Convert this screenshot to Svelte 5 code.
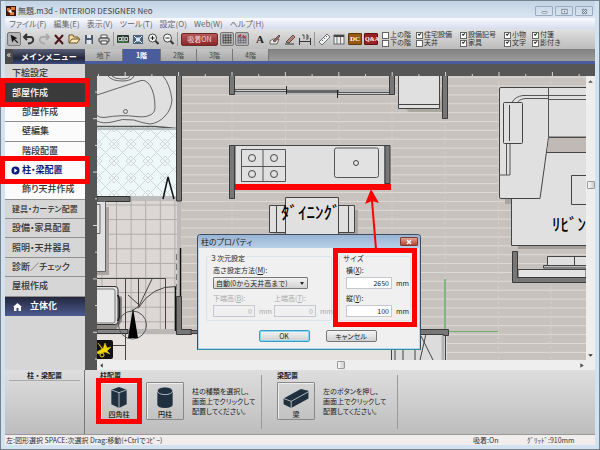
<script>
    const menus = ['ファイル(F)', '編集(E)', '表示(V)', 'ツール(T)', '設定(O)', 'Web(W)', 'ヘルプ(H)'];

    const layers = [
        { label: '上の階', on: false },
        { label: '住宅設備', on: true },
        { label: '設備記号', on: true },
        { label: '小物', on: true },
        { label: '付箋', on: true },
        { label: '下の階', on: false },
        { label: '天井', on: false },
        { label: '家具', on: true },
        { label: '文字', on: true },
        { label: '影付き', on: true }
    ];

    const sideItems = [
        { label: '下絵設定', kind: 'main' },
        { label: '部屋作成', kind: 'open', marked: true },
        { label: '部屋作成', kind: 'sub' },
        { label: '壁編集', kind: 'sub' },
        { label: '階段配置', kind: 'sub' },
        { label: '柱・梁配置', kind: 'sub current', marked: true },
        { label: '飾り天井作成', kind: 'sub' },
        { label: '建具・カーテン配置', kind: 'main long' },
        { label: '設備・家具配置', kind: 'main' },
        { label: '照明・天井器具', kind: 'main' },
        { label: '診断／チェック', kind: 'main' },
        { label: '屋根作成', kind: 'main' },
        { label: '立体化', kind: 'solid' }
    ];

    const floors = ['地下', '1階', '2階', '3階', '4階'];
    let floor = $state('1階');

    let width = $state('2650');
    let depth = $state('100');

    const ticks = Array.from({ length: 40 }, (_, i) => i);
    const burners = [[252, 158], [274, 158], [252, 174], [274, 174]];
</script>

<div class="window">
    <header class="titlebar">
        <svg class="app-icon" viewBox="0 0 10 10">
            <rect width="10" height="10" fill="#43190b" />
            <path d="M1 2h3v3H1zM5 1h4v3H5zM4 6h4v3H4z" fill="#e07a30" />
            <path d="M2 6l3-3 1 4z" fill="#fff" />
        </svg>
        <span class="title">無題.m3d - INTERIOR DESIGNER Neo</span>
        <div class="caption-buttons">
            <button aria-label="最小化"><svg viewBox="0 0 8 8"><rect x="1" y="4" width="6" height="2" rx="1" fill="#fff" stroke="#68788c" stroke-width=".8" /></svg></button>
            <button aria-label="最大化"><svg viewBox="0 0 8 8"><rect x="1" y="1.500" width="6" height="5" fill="#fff" stroke="#68788c" /><rect x="3" y="3" width="2" height="2" fill="#68788c" /></svg></button>
            <button aria-label="閉じる"><svg viewBox="0 0 8 8"><path d="M1.500 1.500l5 5M6.500 1.500l-5 5" stroke="#68788c" stroke-width="2.600" /><path d="M2 2l4 4M6 2l-4 4" stroke="#fff" /></svg></button>
        </div>
    </header>

    <nav class="menubar">
        {#each menus as m}
            <button>{m}</button>
        {/each}
    </nav>

    <div class="toolbar">
        <div class="tools">
            <button class="pressed" aria-label="選択"><svg viewBox="0 0 14 14"><path d="M3 2l8 4-3 1 4 4-1 1-4-4-2 3z" fill="#111" /></svg></button>
            <button aria-label="元に戻す"><svg viewBox="0 0 14 14"><path d="M5 2L2 5l3 3M2.500 5H8q4 0 3 4-1 2.500-5 2.500" fill="none" stroke="#333" stroke-width="2" /></svg></button>
            <button aria-label="やり直し"><svg viewBox="0 0 14 14"><path d="M9 2l3 3-3 3M11.500 5H6Q2 5 3 9q1 2.500 5 2.500" fill="none" stroke="#aaa" stroke-width="2" /></svg></button>
            <button aria-label="削除"><svg viewBox="0 0 14 14"><path d="M3 3l8 9M11 3l-8 9" stroke="#4c1717" stroke-width="2" /></svg></button>
            <button aria-label="開く"><svg viewBox="0 0 14 14"><path d="M2 11V3h4l1 2h4v2" fill="#f4dca5" stroke="#6b5323" /><path d="M2 11l3-4h8l-3 4z" fill="#ffeab8" stroke="#6b5323" /></svg></button>
            <button aria-label="保存"><svg viewBox="0 0 14 14"><path d="M3 3h8v9H3z" fill="#4b5b6c" /><path d="M5 3h4v3H5zM4.500 8h5v4h-5z" fill="#dfe5ea" /></svg></button>
            <button aria-label="印刷"><svg viewBox="0 0 14 14"><path d="M4 3h6v3H4z" fill="#fff" stroke="#555" /><rect x="2" y="6" width="10" height="4" rx="1" fill="#ccc" stroke="#333" /><path d="M4 9h6v3H4z" fill="#fff" stroke="#444" /></svg></button>
        </div>
        <i class="sep"></i>
        <div class="tools">
            <button aria-label="全体"><svg viewBox="0 0 14 14"><rect x="1" y="3" width="12" height="8" rx="1" fill="#2b3a30" /><path d="M2.500 5.500h3v3h-3zM6 5h2v4H6zM9 5.500h2.500v3H9z" fill="none" stroke="#e8efe8" stroke-width=".8" /><path d="M2 10h10" stroke="#4d9a55" /></svg></button>
            <button aria-label="画面に合わせる"><svg viewBox="0 0 14 14"><rect x="2" y="3" width="10" height="9" fill="#47617f" /><rect x="5" y="5.500" width="4" height="4" fill="#dbe7f2" /><path d="M3 4l2 2M11 4L9 6M3 11l2-2M11 11L9 9" stroke="#fff" /></svg></button>
            <button aria-label="拡大"><svg viewBox="0 0 14 14"><circle cx="6.500" cy="6" r="4" fill="#f4f8fb" stroke="#444" /><path d="M4.500 6h4M6.500 4v4" stroke="#222" /><path d="M9.500 9l3 3" stroke="#333" stroke-width="2" /></svg></button>
            <button aria-label="縮小"><svg viewBox="0 0 14 14"><circle cx="6.500" cy="6" r="4" fill="#f4f8fb" stroke="#444" /><path d="M4.500 6h4" stroke="#222" /><path d="M9.500 9l3 3" stroke="#333" stroke-width="2" /></svg></button>
        </div>
        <i class="sep"></i>
        <button class="snap">吸着ON</button>
        <div class="tools">
            <button class="pressed" aria-label="グリッド"><svg viewBox="0 0 14 14"><path d="M2 2.500h10M2 5.500h10M2 8.500h10M2 11.500h10M2.500 2v10M5.500 2v10M8.500 2v10M11.500 2v10" stroke="#444" /></svg></button>
            <button class="pressed" aria-label="グリッド吸着"><svg viewBox="0 0 14 14"><path d="M2 5.500h10M2 8.500h10M2 11.500h10M2.500 3v9M5.500 3v9M8.500 3v9M11.500 3v9" stroke="#667" /><path d="M3 4l3-2M8 3l3 3" stroke="#b33244" stroke-width="2" /></svg></button>
        </div>
        <i class="space"></i>
        <div class="tools">
            <button class="letter">A</button>
            <button aria-label="線"><svg viewBox="0 0 14 14"><path d="M2 9l3-2h6l-2 5H2z" fill="#eee" stroke="#665" /><path d="M5 9l6-6 1 1-5 6z" fill="#a46b64" stroke="#433" stroke-width=".7" /></svg></button>
            <button aria-label="塗り"><svg viewBox="0 0 14 14"><path d="M2 12h9" stroke="#333" /><path d="M3 10l7-7 2 2-6 6z" fill="#b7837b" stroke="#433" stroke-width=".8" /></svg></button>
            <button aria-label="寸法"><svg viewBox="0 0 14 14"><path d="M1.500 6v7M12.500 6v7M1 9.500h12" stroke="#333" /><path d="M4 3h2v4M8 3h2v4H8M8 5h2" fill="none" stroke="#333" stroke-width=".8" /></svg></button>
        </div>
        <i class="sep"></i>
        <div class="tools">
            <button aria-label="計測"><svg viewBox="0 0 14 14"><path d="M2 10l8-8 3 3-8 8z" fill="#f3f5f5" stroke="#6a7276" /><path d="M5 8l1 1M7 6l1 1M9 4l1 1" stroke="#566" /></svg></button>
            <button aria-label="一覧"><svg viewBox="0 0 14 14"><rect x="2" y="3" width="10" height="9" fill="#eee" stroke="#666" /><path d="M2 4h10" stroke="#444" stroke-width="2" /><path d="M5 5v7M8.500 5v7" stroke="#777" /></svg></button>
            <button class="badge dc">DC</button>
            <button class="badge qa">Q&amp;A</button>
        </div>
        <div class="layers">
            {#each layers as l}
                <label><input type="checkbox" bind:checked={l.on} />{l.label}</label>
            {/each}
        </div>
    </div>

    <div class="workspace">
        <aside class="sidebar">
            <div class="side-head"><span class="fold">«</span><h2>メインメニュー</h2></div>
            <div class="side-list">
                {#each sideItems as item}
                    <button class="side-item {item.kind}">
                        {#if item.kind === 'sub current'}
                            <svg viewBox="0 0 9 9"><circle cx="4.500" cy="4.500" r="4" fill="#0b1b78" /><path d="M3.300 2.200l3.200 2.300-3.200 2.300z" fill="#fff" /></svg>
                        {:else if item.kind === 'solid'}
                            <svg viewBox="0 0 9 9"><path d="M0 5l4.500-4L9 5H8v4H5.500V6h-2v3H1V5z" fill="#fff" /></svg>
                        {/if}
                        {item.label}
                        {#if item.marked}<i class="mark"></i>{/if}
                    </button>
                {/each}
            </div>
        </aside>

        <section class="editor">
            <div class="tabs">
                {#each floors as f}
                    <button class:active={f === floor} onclick={() => (floor = f)}>{f}</button>
                {/each}
            </div>
            <div class="sheet">
                <svg class="ruler-top">
                    {#each ticks as t}
                        <path d="M{13.500 + t * 26.700} {t % 2 ? 8 : 10}v4" stroke="#d5d5d5" />
                    {/each}
                </svg>
                <svg class="ruler-left">
                    {#each ticks as t}
                        <path d="M{t % 2 ? 8 : 10} {16 + t * 26.700}h4" stroke="#d5d5d5" />
                    {/each}
                </svg>
                <div class="canvas">
                    <svg class="plan" viewBox="97 76 489 284" preserveAspectRatio="xMinYMin slice">
                        <defs>
                            <pattern id="boards" y="76.600" width="40" height="8.880" patternUnits="userSpaceOnUse">
                                <rect width="40" height="9" fill="#c8c2be" />
                                <path d="M0 .5h40" stroke="#dedad7" />
                            </pattern>
                            <pattern id="tiles" x="116" y="204.500" width="14.600" height="14.600" patternUnits="userSpaceOnUse">
                                <rect width="15" height="15" fill="#dcd7d4" />
                                <path d="M0 .5h15M.5 0v15" stroke="#aeabaa" />
                            </pattern>
                            <pattern id="bath" x="97" y="127" width="17" height="17" patternUnits="userSpaceOnUse">
                                <rect width="17" height="17" fill="#eff8f9" />
                                <path d="M0 0l17 17M17 0L0 17M0 5L5 0M12 17l5-5M0 12l5 5M12 0l5 5" stroke="#d0d8d6" />
                            </pattern>
                        </defs>
                        <rect x="97" y="76" width="489" height="284" fill="url(#boards)" />
                        <path d="M232 76v284M285.500 76v284M339 76v284M392 76v284M445 76v284M498.500 76v284M551 76v284" stroke="#d3cecb" stroke-dasharray="3 2" />

                        <!-- bathroom -->
                        <rect x="97" y="76" width="80" height="52" fill="#e0e0e0" />
                        <g fill="none" stroke="#444" stroke-width=".8">
                            <path d="M97 95L141 80.500q5-1 9 5 5 8 5 22 0 6-6 8-4 2-13 1-14-2-32 1-5 0-7-2" />
                            <path d="M163 76q7 8 9 24-1 10-7 16-6 7-15 8-8-1-16-4-12-2-22 2-9 2-15-1" />
                            <circle cx="125.500" cy="111.500" r="2" />
                            <path d="M108 76q4 5 14 5t12-5M112 76q3 3 10 3t8-3" />
                        </g>
                        <rect x="97" y="127" width="80" height="70" fill="url(#bath)" />
                        <path d="M97 126.500h58l22 2" fill="none" stroke="#555" stroke-width="1.500" />
                        <path d="M97 129h80" stroke="#b5bcbc" stroke-width="2" />

                        <!-- washroom and stairs -->
                        <rect x="97" y="197" width="80" height="133" fill="url(#tiles)" />
                        <path d="M97 196h80v5H97z" fill="#bebebe" />
                        <path d="M97 196.500h33v5H97z" fill="#6d6d6d" stroke="#333" />
                        <path d="M105 207h4v68H97v-3h8z" fill="#aaa5a2" />
                        <path d="M96 201.500h9.500v70H96zM96 204.500h4v29h-4z" fill="#e0e0e0" stroke="#666" />
                        <g fill="none" stroke="#444">
                            <path d="M97 278.500h68.500v51M125.500 278.500v56M138.500 278.500v28M152 279l-13 27-7 5M128 295l10 9" />
                            <path d="M176 286.500q-24-1-38 22" />
                        </g>
                        <path d="M114 293l8 4v24l-7 10H97v-7z" fill="#8d8a88" />
                        <rect x="90" y="286.500" width="28" height="38" rx="3" fill="#e0e0e0" stroke="#333" />
                        <rect x="90" y="289" width="25" height="34" rx="2" fill="#e8e8e8" stroke="#777" />
                        <path d="M117.500 295l2 4v18l-2 4" fill="none" stroke="#222" stroke-width="1.500" />
                        <path d="M97 335h293v25H97z" fill="#e6e2df" />
                        <path d="M97 329h80v5H97z" fill="#b9b8b7" />
                        <path d="M97 329.500h31v4H97z" fill="#858585" stroke="#333" />
                        <path d="M97 345.500h28.500M125.500 334v26" stroke="#444" />
                        <circle cx="132.500" cy="325" r="14" fill="none" stroke="#555" />
                        <path d="M133 308l5 30h-10z" fill="#000" />
                        <rect x="94" y="340" width="19" height="19" rx="2" fill="#111" />
                        <path d="M98 343l5 6 2-6 2 5 4-1-4 4 3 3-5-2-7 2-1-2 5-3z" fill="#f2d600" stroke="#f2d600" stroke-width=".5" />
                        <circle cx="102" cy="355" r="2" fill="none" stroke="#f2d600" />
                        <path d="M163 199l5-22 6 22" fill="none" stroke="#111" stroke-width="1.500" />

                        <!-- walls on the left side -->
                        <path d="M177 201h4v95h-4z" fill="#bdbab9" />
                        <path d="M180.500 248v49M175.500 287v44" stroke="#111" stroke-width="1.500" />
                        <path d="M176.500 254v40" stroke="#777" stroke-dasharray="6 4" />
                        <g fill="#777" stroke="#3b3b3b">
                            <path d="M176.500 70h5v131h-5z" />
                            <path d="M176.500 296.500h5v33h10v5h-15z" />
                            <path d="M191 330.500h10v3h-10z" />
                        </g>

                        <!-- sliding doors and refrigerator -->
                        <path d="M235 89h154v6H235z" fill="#b9b8b7" />
                        <path d="M235 89.500h52v2h-52zM338 92.500h52v2h-52z" fill="#ccc" stroke="#555" />
                        <path d="M286 91.500h53" stroke="#666" stroke-width="3" />
                        <path d="M286.500 86v8M337.500 90v8" stroke="#222" />
                        <path d="M406 109h33l4-28v31h-34z" fill="#aba7a0" />
                        <path d="M398.500 70h41v38.500h-41zM399 104.500h40" fill="#e0e0e0" stroke="#444" />

                        <!-- kitchen -->
                        <rect x="235" y="145.500" width="150" height="39" fill="#e0e0e0" stroke="#444" />
                        <path d="M241.500 149.500h44v32h-44zM263 149.500v32M241.500 166.500h44" fill="none" stroke="#555" />
                        {#each burners as [cx, cy]}
                            <circle {cx} {cy} r="3.500" fill="none" stroke="#444" />
                        {/each}
                        <rect x="334.500" y="148" width="44" height="29.500" rx="2" fill="#e2e2e2" stroke="#555" />
                        <circle cx="356" cy="163" r="2.500" fill="none" stroke="#444" />
                        <g fill="#777" stroke="#3b3b3b">
                            <path d="M229.500 70h5v24.500h-5zM389.500 70h5v24.500h-5zM442.500 70h5v48.500h-5z" />
                            <path d="M229.500 145.500h5v53h-5zM385 145.500h5v38h-5z" />
                        </g>
                        <path d="M235 184h156v6H235z" fill="#f00" />

                        <!-- dining table -->
                        <path d="M351 210h7v27h-84v-4h77z" fill="#aaa5a2" />
                        <path d="M269.500 205.500h7v27h-7zM276.500 205.500h10v27h-10zM338.500 205.500h10v27h-10zM348.500 205.500h6v27h-6z" fill="#e0e0e0" stroke="#444" />
                        <path d="M285.500 197.500h53v40h-53z" fill="#e0e0e0" stroke="#444" />
                        <text x="281" y="219">ﾀﾞｲﾆﾝｸﾞ</text>

                        <!-- living room -->
                        <path d="M548 137h38v15h-38z" fill="#b5adaa" />
                        <path d="M505 199h9v5h-9z" fill="#aaa5a2" />
                        <path d="M511.500 152.500H590v93h-78.500z" fill="#e0e0e0" stroke="#444" />
                        <path d="M518 246h68v3h-68z" fill="#a39d9a" />
                        <path d="M499.500 89q0-1.500 1.500-1.500H590v50h-41.500L540 198.500h-39q-1.500 0-1.500-1.500z" fill="#e0e0e0" stroke="#444" />
                        <path d="M548.500 87v50M549 99.500h37M549 137h37M549 95.500h37M548 95.500h-25q-8 1-11 7M548 98.500h-23q-7 1-8 5M506.500 143v32M510 143v32h-11" fill="none" stroke="#555" />
                        <path d="M549 138h37v14h-39z" fill="#c0b9b5" />
                        <rect x="503.500" y="102.500" width="19" height="41" rx="1" fill="#e0e0e0" stroke="#444" />
                        <path d="M509.500 105v36" stroke="#444" />
                        <path d="M571.500 175.500H590v29h-18.500z" fill="none" stroke="#444" />
                        <text x="552" y="231">ﾘﾋﾞﾝ</text>
                        <path d="M518 269.500h68v8h-68z" fill="#e4e4e4" stroke="#444" />
                        <path d="M543.500 265.500H590v2.500h-46.500z" fill="#bbb" stroke="#444" />
                        <path d="M547.500 256.500H590v9h-42.500zM574.500 256.500v9" fill="#e0e0e0" stroke="#444" />
                        <path d="M512.500 251.500h5v26H590v5h-77.500z" fill="#777" stroke="#3b3b3b" />

                        <!-- entrance steps and origin -->
                        <path d="M390 334h57v26h-57z" fill="#dcdcdc" />
                        <path d="M391.500 334v26M395 334v26M403 350v10M415 350v10M421 336l12 24M445.500 334v26M426 334l-6 26" stroke="#444" />
                        <path d="M443 334v26" stroke="#b5b5b5" stroke-width="3" />
                        <path d="M390 329.500h58.500v6h-5v-1H390z" fill="#777" stroke="#3b3b3b" />
                        <path d="M445 279v50" stroke="#80b57d" stroke-width="2" />
                        <path d="M449 331.500h49" stroke="#6fae6c" />
                    </svg>

                    <form class="dialog" onsubmit={(e) => e.preventDefault()}>
                        <div class="dialog-title">
                            <span>柱のプロパティ</span>
                            <button type="button" class="dialog-close" aria-label="閉じる"><svg viewBox="0 0 8 6"><path d="M2 1l4 4M6 1L2 5" stroke="#fff" stroke-width="1.500" /></svg></button>
                        </div>
                        <div class="dialog-body">
                            <div class="boxes">
                                <div class="box three-d">
                                    <fieldset>
                                        <legend>３次元設定</legend>
                                        <div class="field">
                                            <label for="method">高さ設定方法(<u>M</u>):</label>
                                            <div class="combo">
                                                <select id="method"><option>自動(0から天井高まで)</option></select>
                                            </div>
                                        </div>
                                        <div class="pair">
                                            <div class="field off">
                                                <label for="bottom">下端高(<u>B</u>):</label>
                                                <div class="unit"><input id="bottom" value="0" disabled />mm</div>
                                            </div>
                                            <div class="field off">
                                                <label for="top">上端高(<u>T</u>):</label>
                                                <div class="unit"><input id="top" value="0" disabled />mm</div>
                                            </div>
                                        </div>
                                    </fieldset>
                                </div>
                                <div class="box size">
                                    <fieldset>
                                        <legend>サイズ</legend>
                                        <div class="field">
                                            <label for="width">横(<u>X</u>):</label>
                                            <div class="unit"><input id="width" bind:value={width} />mm</div>
                                        </div>
                                        <div class="field">
                                            <label for="depth">縦(<u>Y</u>):</label>
                                            <div class="unit"><input id="depth" bind:value={depth} />mm</div>
                                        </div>
                                    </fieldset>
                                    <i class="mark"></i>
                                </div>
                            </div>
                            <div class="actions">
                                <button class="default">OK</button>
                                <button type="button">キャンセル</button>
                            </div>
                        </div>
                    </form>
                    <svg class="arrow" viewBox="0 0 16 60"><path d="M8 12l4 48" stroke="#f00" stroke-width="2" /><path d="M7 0l8 14-7-2-7 3z" fill="#f00" /></svg>
                </div>
                <div class="vscroll">
                    <button aria-label="上へ"><svg viewBox="0 0 6 6"><path d="M1 4l2-2 2 2z" fill="#555" /></svg></button>
                    <i class="before"></i><i class="thumb"></i><i class="after"></i>
                    <button aria-label="下へ"><svg viewBox="0 0 6 6"><path d="M1 2l2 2 2-2z" fill="#333" /></svg></button>
                </div>
                <div class="hscroll">
                    <button aria-label="左へ"><svg viewBox="0 0 6 6"><path d="M4 1L2 3l2 2z" fill="#333" /></svg></button>
                    <i class="before"></i><i class="thumb"></i><i class="after"></i>
                    <button aria-label="右へ"><svg viewBox="0 0 6 6"><path d="M2 1l3 2-3 2z" fill="#555" /></svg></button>
                </div>
            </div>
        </section>
    </div>

    <section class="panel">
        <div class="panel-name"><h3>柱・梁配置</h3></div>
        <div class="parts posts">
            <h3>柱配置</h3>
            <div class="row">
                <button class="part">
                    <svg viewBox="0 0 20 24"><path d="M10 1l8 3v15l-8 4-8-4V4z" fill="#20303f" /><path d="M2 4l8 3 8-3M10 7v16" fill="none" stroke="#d8dde2" stroke-width=".8" /></svg>
                    四角柱
                    <i class="mark"></i>
                </button>
                <button class="part">
                    <svg viewBox="0 0 20 24"><path d="M2 5v14q0 4 8 4t8-4V5z" fill="#20303f" /><ellipse cx="10" cy="5" rx="8" ry="4" fill="#20303f" stroke="#d8dde2" stroke-width=".8" /></svg>
                    円柱
                </button>
                <p>柱の種類を選択し、<br />画面上でクリックして<br />配置してください。</p>
            </div>
        </div>
        <div class="parts beams">
            <h3>梁配置</h3>
            <div class="row">
                <button class="part">
                    <svg class="wide" viewBox="0 0 30 24"><path d="M2 13L20 3l8 2v8L10 23l-8-4z" fill="#20303f" /><path d="M2 13l8 3 18-10M10 16v7" fill="none" stroke="#d8dde2" stroke-width=".8" /></svg>
                    梁
                </button>
                <p>左のボタンを押し、<br />画面上でクリックして<br />配置してください。</p>
            </div>
        </div>
    </section>

    <footer class="status">
        <span class="hint">左:図形選択 SPACE:次選択 Drag:移動(+Ctrlでｺﾋﾟｰ)</span>
        <span class="snap-state">吸着:On</span>
        <span class="grid-state">ｸﾞﾘｯﾄﾞ:910mm</span>
    </footer>
</div>

<style>
    :global(body) {
        margin: 0;
        background: #d3e2f0;
    }

    .window {
        display: flex;
        flex-direction: column;
        box-sizing: border-box;
        min-height: 100vh;
        padding: 0 5px 5px;
        background: #d3e2f0;
        box-shadow: inset 0 0 0 1px #77828f;
        font-family: "Noto Sans CJK JP", "Noto Sans", sans-serif;
        font-size: 7px;
        line-height: 10px;
        color: #222;
    }

    button,
    input,
    select {
        margin: 0;
        padding: 0;
        border: 0;
        border-radius: 0;
        background: none;
        font: inherit;
        color: inherit;
        box-sizing: border-box;
    }

    svg {
        display: block;
    }

    h2,
    h3,
    p {
        margin: 0;
        font-size: inherit;
    }

    .mark {
        position: absolute;
        inset: -5px;
        border: 5px solid #f00;
        z-index: 2;
        pointer-events: none;
    }

    .titlebar {
        display: flex;
        align-items: center;
        height: 18px;
        box-sizing: border-box;
        padding: 3px 2px 0 1px;
        background: linear-gradient(#c3d3e4, #dbe6f2);
        border-top: 1px solid #77828f;
    }

    .app-icon {
        width: 10px;
        height: 10px;
    }

    .title {
        flex: 1;
        margin-left: 2px;
        font-size: 8px;
        font-feature-settings: "palt";
        color: #444;
    }

    .caption-buttons {
        display: flex;
        gap: 2px;
    }

    .caption-buttons button {
        display: flex;
        align-items: center;
        justify-content: center;
        width: 18px;
        height: 10px;
        border: 1px solid #9aabc0;
        border-radius: 1px;
    }

    .caption-buttons svg {
        width: 7px;
        height: 7px;
    }

    .menubar {
        display: flex;
        gap: 7px;
        height: 11px;
        padding-left: 4px;
        background: linear-gradient(#fafbfe, #d6dcee);
    }

    .menubar button {
        font-size: 8px;
        font-feature-settings: "palt";
        color: #666;
    }

    .toolbar {
        display: flex;
        align-items: center;
        height: 20px;
        padding-left: 2px;
        background: linear-gradient(#e0e0e0, #bcbcbc);
        overflow: hidden;
    }

    .tools {
        display: flex;
        gap: 1px;
    }

    .tools button {
        width: 14px;
        height: 14px;
    }

    .tools .pressed {
        border: 1px solid #777;
        border-radius: 2px;
        background: #b5b5b5;
    }

    .tools .letter {
        font-family: "Liberation Serif", serif;
        font-size: 11px;
        font-weight: bold;
    }

    .tools .badge {
        height: 12px;
        margin: 1px 0 0 1px;
        border: 1px solid #5c3a12;
        border-radius: 1px;
        font-family: "Liberation Serif", serif;
        font-size: 7px;
        font-weight: bold;
        color: #fff;
    }

    .tools .dc {
        background: #99590f;
    }

    .tools .qa {
        border-color: #5c1212;
        background: #982226;
        font-size: 6px;
    }

    .sep {
        flex: none;
        width: 1px;
        height: 14px;
        margin: 0 2px;
        background: #999;
    }

    .space {
        flex: none;
        width: 4px;
    }

    .snap {
        flex: none;
        width: 37px;
        height: 13px;
        margin: 0 2px 0 1px;
        border: 1px solid #6d2a2a;
        border-radius: 2px;
        background: linear-gradient(#b35a5a, #8e2626);
        color: #f3dada;
    }

    .layers {
        display: grid;
        grid-template-columns: 34px 44px 44px 28px auto;
        margin-left: 4px;
        font-family: "Liberation Sans", "Noto Sans CJK JP", sans-serif;
    }

    .layers label {
        display: flex;
        align-items: center;
        gap: 1px;
        height: 8px;
        line-height: 8px;
        white-space: nowrap;
        color: #333;
    }

    .layers input {
        appearance: none;
        position: relative;
        width: 7px;
        height: 7px;
        border: 1px solid #666;
        background: #fff;
    }

    .layers input:checked::after {
        content: "";
        position: absolute;
        left: 1px;
        top: 0;
        width: 3px;
        height: 2px;
        box-sizing: border-box;
        border: solid #222;
        border-width: 0 0 1px 1px;
        transform: rotate(-45deg);
    }

    .workspace {
        display: flex;
        flex: 1;
    }

    .sidebar {
        flex: none;
        width: 80px;
        background: #d6d6d6;
    }

    .side-head {
        display: flex;
        height: 15px;
        line-height: 15px;
        background: linear-gradient(#5b6078, #24283c 60%, #3d4a7c);
        color: #fff;
    }

    .side-head h2 {
        flex: 1;
        font-size: 8px;
        text-align: center;
    }

    .fold {
        width: 8px;
        background: #4a4a4a;
        font-size: 9px;
        text-align: center;
        line-height: 12px;
    }

    .side-list {
        display: grid;
        grid-template-columns: minmax(0, 1fr);
        grid-template-rows: repeat(13, 1fr);
        height: 252px;
    }

    .side-item {
        position: relative;
        display: flex;
        align-items: center;
        padding-left: 7px;
        border-bottom: 1px solid #8f8f8f;
        font-size: 9px;
        font-weight: 500;
        font-feature-settings: "palt";
        white-space: nowrap;
        color: #333;
    }

    .side-item svg {
        width: 9px;
        height: 9px;
        margin-right: 2px;
    }

    .side-item.long {
        font-size: 8px;
    }

    .side-item.open {
        background: #3a3a3a;
        color: #fff;
    }

    .side-item.sub {
        padding-left: 17px;
        background: #fbfbfb;
    }

    .side-item.current {
        padding-left: 6px;
        font-weight: bold;
        color: #0b1b78;
    }

    .side-item.solid {
        padding-left: 8px;
        border-bottom: 0;
        background: linear-gradient(#23283d, #4d5a90);
        font-weight: bold;
        color: #fff;
    }

    .side-item.solid svg {
        margin-right: 8px;
    }

    .editor {
        display: flex;
        flex-direction: column;
        flex: 1;
        min-width: 0;
    }

    .tabs {
        display: flex;
        height: 15px;
        box-sizing: border-box;
        border-bottom: 3px solid #4a5c9b;
        background: linear-gradient(#808080, #9c9c9c);
    }

    .tabs button {
        width: 36px;
        border-right: 1px solid #777;
        background: linear-gradient(#c4c4c4, #a8a8a8);
        color: #444;
    }

    .tabs button:nth-child(-n + 2) {
        width: 38px;
    }

    .tabs .active {
        background: #4a5c9b;
        font-weight: bold;
        color: #fff;
    }

    .sheet {
        display: grid;
        flex: 1;
        grid-template-columns: 12px 1fr 9px;
        grid-template-rows: 12px 1fr 10px;
        background: #565656;
    }

    .ruler-top {
        grid-area: 1 / 1 / 2 / 4;
        width: 100%;
        height: 12px;
    }

    .ruler-left {
        grid-area: 2 / 1 / 3 / 2;
        width: 12px;
        height: 100%;
    }

    .canvas {
        grid-area: 2 / 2 / 3 / 3;
        position: relative;
        min-height: 284px;
    }

    .plan {
        position: absolute;
        width: 100%;
        height: 100%;
    }

    .plan text {
        font-size: 17px;
        font-weight: 500;
        fill: #000;
    }

    .vscroll,
    .hscroll {
        display: flex;
        align-items: center;
        background: #eee;
    }

    .vscroll {
        grid-area: 2 / 3 / 3 / 4;
        flex-direction: column;
    }

    .hscroll {
        grid-area: 3 / 2 / 4 / 4;
        padding-right: 9px;
    }

    .vscroll button,
    .hscroll button {
        width: 9px;
        height: 10px;
        padding: 1px;
    }

    .thumb {
        width: 8px;
        height: 8px;
        box-sizing: border-box;
        border: 1px solid #999;
        border-radius: 1px;
        background: linear-gradient(90deg, #fafafa, #ccc);
    }

    .vscroll .before {
        flex: 95;
    }

    .vscroll .after {
        flex: 161;
    }

    .hscroll .before {
        flex: 231;
    }

    .hscroll .after {
        flex: 232;
    }

    .dialog {
        position: absolute;
        left: 100px;
        top: 158px;
        display: flex;
        flex-direction: column;
        width: 224px;
        box-sizing: border-box;
        border: 1px solid #3f4d5c;
        border-bottom-color: #2f93a8;
        border-radius: 4px 4px 0 0;
        background: #f0f0f0;
        box-shadow: inset 0 0 0 1px #b8d3ea;
        color: #222;
    }

    .dialog-title {
        display: flex;
        align-items: center;
        justify-content: space-between;
        height: 13px;
        padding: 0 2px 0 3px;
        border-radius: 3px 3px 0 0;
        background: linear-gradient(#98b4d4, #b8cfe8);
    }

    .dialog-title span {
        font-feature-settings: "palt";
        font-size: 8px;
    }

    .dialog-close {
        display: flex;
        align-items: center;
        justify-content: center;
        width: 18px;
        height: 9px;
        border: 1px solid #7c3a34;
        border-radius: 1px;
        background: linear-gradient(#e0a193, #b94530);
    }

    .dialog-close svg {
        width: 8px;
        height: 6px;
    }

    .dialog-body {
        padding: 5px 7px 7px;
    }

    .boxes {
        display: flex;
        gap: 5px;
    }

    .box {
        position: relative;
        height: 69px;
    }

    /* group outline, drawn behind the legend */
    .box::before {
        content: "";
        position: absolute;
        inset: 3px 1px 1px 1px;
        border: 1px solid #dce3e8;
        border-radius: 2px;
    }

    .three-d {
        width: 128px;
    }

    .size {
        width: 74px;
    }

    fieldset {
        position: relative;
        min-width: 0;
        margin: 0;
        padding: 2px 0 0 8px;
        border: 0;
    }

    legend {
        margin-left: -4px;
        padding: 0 1px;
        height: 10px;
        background: #f0f0f0;
    }

    .field {
        display: flex;
        flex-direction: column;
        gap: 2px;
        margin-bottom: 4px;
    }

    .field.off {
        color: #aaa;
    }

    .pair {
        display: grid;
        grid-template-columns: 61px auto;
    }

    .combo {
        position: relative;
        width: 95px;
    }

    .combo::after {
        content: "";
        position: absolute;
        right: 4px;
        top: 5px;
        border: 2px solid transparent;
        border-top: 3px solid #222;
        pointer-events: none;
    }

    select {
        appearance: none;
        display: block;
        width: 100%;
        height: 12px;
        padding-left: 2px;
        border: 1px solid #777;
        border-radius: 1px;
        background: linear-gradient(#f2f2f2, #d2d2d2);
    }

    .unit {
        display: flex;
        align-items: center;
        gap: 4px;
    }

    .unit input {
        width: 42px;
        height: 12px;
        padding-right: 2px;
        border: 1px solid #c5c9cf;
        background: #fff;
        text-align: right;
    }

    .size .unit input {
        width: 46px;
    }

    .unit input:disabled {
        background: #f0f0f0;
    }

    .actions {
        display: flex;
        justify-content: center;
        gap: 16px;
        margin-top: 8px;
        padding-left: 17px;
    }

    .actions button {
        width: 51px;
        height: 12px;
        border: 1px solid #777;
        border-radius: 2px;
        background: linear-gradient(#f4f4f4, #d0d0d0);
        font-feature-settings: "palt";
    }

    .actions .default {
        border-color: #3a9cc4;
        box-shadow: inset 0 0 0 1px #8fd6ef;
    }

    .arrow {
        position: absolute;
        left: 267px;
        top: 113px;
        width: 16px;
        height: 60px;
    }

    .panel {
        display: flex;
        height: 64px;
        background: linear-gradient(#dedede, #bdbdbd);
    }

    .panel-name {
        width: 80px;
        box-sizing: border-box;
        padding: 0 4px;
        border-right: 1px solid #777;
        text-align: center;
    }

    .panel-name h3 {
        border-bottom: 1px solid #aaa;
    }

    .parts {
        position: relative;
        padding-left: 15px;
    }

    .parts::after {
        content: "";
        position: absolute;
        right: 0;
        top: 5px;
        bottom: 5px;
        width: 1px;
        background: #999;
    }

    .posts {
        width: 162px;
    }

    .beams {
        width: 121px;
    }

    .row {
        display: flex;
        gap: 8px;
        margin-top: 2px;
    }

    .part {
        position: relative;
        display: flex;
        flex-direction: column;
        align-items: center;
        width: 38px;
        height: 38px;
        border: 1px solid #888;
        border-radius: 1px;
        background: linear-gradient(#d4d4d4, #c2c2c2);
        box-shadow: inset 1px 1px #eee;
        font-weight: 500;
    }

    .part svg {
        width: 20px;
        height: 24px;
        margin-top: 3px;
    }

    .part .wide {
        width: 30px;
    }

    .row p {
        margin-top: 4px;
        font-feature-settings: "palt";
        white-space: nowrap;
    }

    .status {
        display: flex;
        height: 11px;
        box-sizing: border-box;
        border-top: 1px solid #999;
        padding-left: 1px;
        background: #f1eded;
        color: #333;
        white-space: nowrap;
    }

    .hint {
        flex: 1;
    }

    .snap-state {
        width: 54px;
    }

    .grid-state {
        width: 68px;
    }
</style>
